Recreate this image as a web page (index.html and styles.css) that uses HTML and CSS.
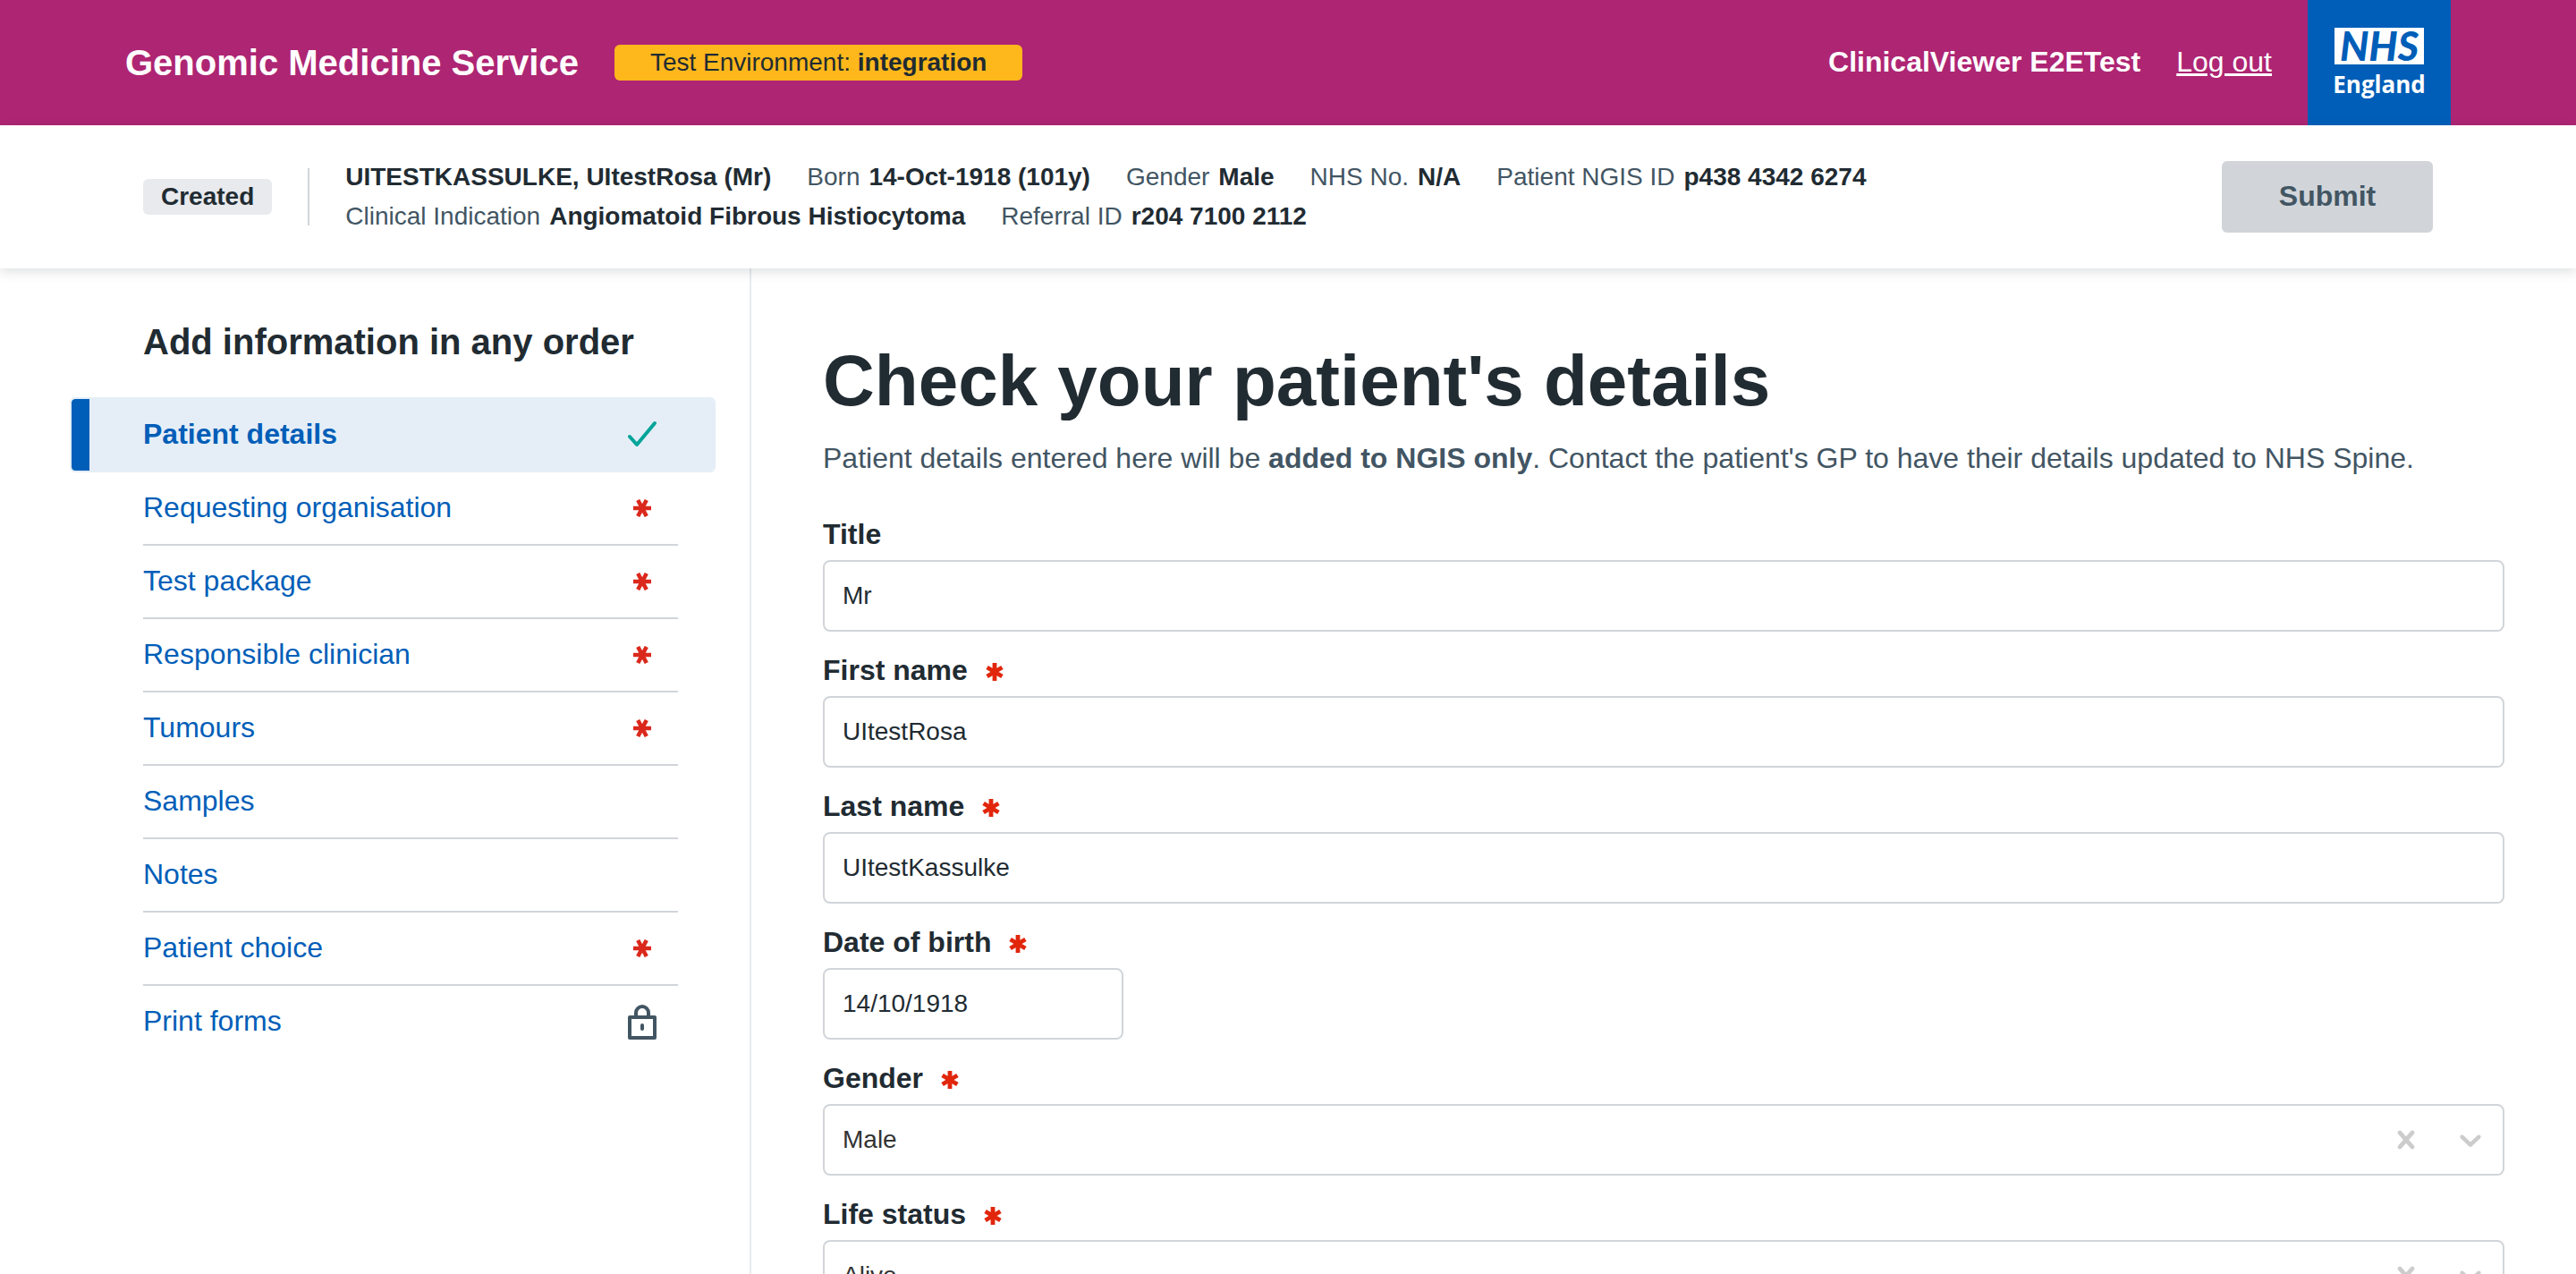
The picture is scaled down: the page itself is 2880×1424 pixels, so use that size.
FILE: index.html
```html
<!DOCTYPE html>
<html lang="en">
<head>
<meta charset="utf-8">
<meta name="viewport" content="width=device-width, initial-scale=1">
<title>Patient details - Genomic Medicine Service</title>
<link rel="stylesheet" href="styles.css">
</head>
<body>
<svg class="sprite" aria-hidden="true">
  <symbol id="required-nav" viewBox="0 0 20 20">
    <path d="M0 10h20M5.2 1l9.6 18M14.8 1L5.2 19" fill="none" stroke="currentColor" stroke-width="4.6"/>
  </symbol>
  <symbol id="required" viewBox="0 0 20 20">
    <path d="M10 0v20M1.6 5l16.8 10M18.4 5L1.6 15" fill="none" stroke="currentColor" stroke-width="4.8"/>
  </symbol>
  <symbol id="tick" viewBox="0 0 32 40">
    <path d="M2 22l8 9L30 7" fill="none" stroke="currentColor" stroke-width="4" stroke-linecap="round" stroke-linejoin="round"/>
  </symbol>
  <symbol id="lock" viewBox="0 0 32 40">
    <path d="M9 14V10a7 7 0 0 1 14 0v4" fill="none" stroke="currentColor" stroke-width="4"/>
    <rect x="2" y="15" width="28" height="23" fill="none" stroke="currentColor" stroke-width="4" stroke-linejoin="round"/>
    <rect x="14" y="22" width="4" height="8" rx="2" fill="currentColor"/>
  </symbol>
  <symbol id="clear" viewBox="0 0 20 20">
    <path fill="currentColor" d="M14.348 14.849c-0.469 0.469-1.229 0.469-1.697 0l-2.651-3.030-2.651 3.029c-0.469 0.469-1.229 0.469-1.697 0-0.469-0.469-0.469-1.229 0-1.697l2.758-3.15-2.759-3.152c-0.469-0.469-0.469-1.228 0-1.697s1.228-0.469 1.697 0l2.652 3.031 2.651-3.031c0.469-0.469 1.228-0.469 1.697 0s0.469 1.229 0 1.697l-2.758 3.152 2.758 3.15c0.469 0.469 0.469 1.229 0 1.698z"/>
  </symbol>
  <symbol id="chevron" viewBox="0 0 20 20">
    <path fill="currentColor" d="M4.516 7.548c0.436-0.446 1.043-0.481 1.576 0l3.908 3.747 3.908-3.747c0.533-0.481 1.141-0.446 1.574 0 0.436 0.445 0.408 1.197 0 1.615-0.406 0.418-4.695 4.502-4.695 4.502-0.217 0.223-0.502 0.335-0.787 0.335s-0.57-0.112-0.789-0.335c0 0-4.287-4.084-4.695-4.502s-0.436-1.17 0-1.615z"/>
  </symbol>
</svg>

<header class="site-header">
  <div class="site-title">Genomic Medicine Service</div>
  <div class="environment">Test Environment: <strong>integration</strong></div>
  <div class="account">
    <span class="user-name">ClinicalViewer E2ETest</span>
    <a class="log-out" href="#">Log out</a>
  </div>
  <div class="nhs-logo">
    <span class="nhs-mark">NHS</span>
    <span class="nhs-region">England</span>
  </div>
</header>

<section class="patient-bar" aria-label="Referral summary">
  <span class="status">Created</span>
  <dl class="summary">
    <div class="summary-row">
      <div class="fact"><dd>UITESTKASSULKE, UItestRosa (Mr)</dd></div>
      <div class="fact"><dt>Born</dt><dd>14-Oct-1918 (101y)</dd></div>
      <div class="fact"><dt>Gender</dt><dd>Male</dd></div>
      <div class="fact"><dt>NHS No.</dt><dd>N/A</dd></div>
      <div class="fact"><dt>Patient NGIS ID</dt><dd>p438 4342 6274</dd></div>
    </div>
    <div class="summary-row">
      <div class="fact"><dt>Clinical Indication</dt><dd>Angiomatoid Fibrous Histiocytoma</dd></div>
      <div class="fact"><dt>Referral ID</dt><dd>r204 7100 2112</dd></div>
    </div>
  </dl>
  <button class="submit" type="button">Submit</button>
</section>

<div class="workspace">
  <nav class="sidebar" aria-labelledby="todo-heading">
    <h2 class="sidebar-title" id="todo-heading">Add information in any order</h2>
    <ul class="todo">
      <li class="todo-item active"><a href="#" aria-current="page">Patient details</a><svg class="icon-large done"><use href="#tick"/></svg></li>
      <li class="todo-item"><a href="#">Requesting organisation</a><svg class="icon-small"><use href="#required-nav"/></svg></li>
      <li class="todo-item"><a href="#">Test package</a><svg class="icon-small"><use href="#required-nav"/></svg></li>
      <li class="todo-item"><a href="#">Responsible clinician</a><svg class="icon-small"><use href="#required-nav"/></svg></li>
      <li class="todo-item"><a href="#">Tumours</a><svg class="icon-small"><use href="#required-nav"/></svg></li>
      <li class="todo-item"><a href="#">Samples</a></li>
      <li class="todo-item"><a href="#">Notes</a></li>
      <li class="todo-item"><a href="#">Patient choice</a><svg class="icon-small"><use href="#required-nav"/></svg></li>
      <li class="todo-item"><a href="#">Print forms</a><svg class="icon-large locked"><use href="#lock"/></svg></li>
    </ul>
  </nav>

  <main class="content">
    <h1 class="page-title">Check your patient's details</h1>
    <p class="intro">Patient details entered here will be <strong>added to NGIS only</strong>. Contact the patient's GP to have their details updated to NHS Spine.</p>
    <form class="form">
      <div class="field">
        <label for="title">Title</label>
        <input id="title" type="text" value="Mr">
      </div>
      <div class="field">
        <label for="first-name">First name <svg class="required"><use href="#required"/></svg></label>
        <input id="first-name" type="text" value="UItestRosa">
      </div>
      <div class="field">
        <label for="last-name">Last name <svg class="required"><use href="#required"/></svg></label>
        <input id="last-name" type="text" value="UItestKassulke">
      </div>
      <div class="field">
        <label for="birth-date">Date of birth <svg class="required"><use href="#required"/></svg></label>
        <input class="date" id="birth-date" type="text" value="14/10/1918">
      </div>
      <div class="field">
        <label for="gender">Gender <svg class="required"><use href="#required"/></svg></label>
        <div class="dropdown">
          <select id="gender"><option>Male</option><option>Female</option><option>Other</option></select>
          <div class="indicators">
            <button type="button" aria-label="Clear gender"><svg><use href="#clear"/></svg></button>
            <svg><use href="#chevron"/></svg>
          </div>
        </div>
      </div>
      <div class="field">
        <label for="life-status">Life status <svg class="required"><use href="#required"/></svg></label>
        <div class="dropdown">
          <select id="life-status"><option>Alive</option><option>Deceased</option></select>
          <div class="indicators">
            <button type="button" aria-label="Clear life status"><svg><use href="#clear"/></svg></button>
            <svg><use href="#chevron"/></svg>
          </div>
        </div>
      </div>
    </form>
  </main>
</div>
</body>
</html>
```
FILE: styles.css
```css
* {
  box-sizing: border-box;
}

:root {
  --ink: #212b32;
  --slate: #425563;
  --line: #d1d5da;
  --blue: #005eb8;
}

body {
  margin: 0;
  height: 100vh;
  display: flex;
  flex-direction: column;
  background: #fff;
  color: var(--ink);
  font: 28px/40px "Liberation Sans", Arial, sans-serif;
}

.sprite {
  display: none;
}

.site-header {
  flex: none;
  display: flex;
  align-items: center;
  min-height: 140px;
  padding: 0 140px;
  background: #ae2573;
  color: #fff;
}

.site-title {
  margin-right: 40px;
  font-size: 40px;
  font-weight: bold;
}

.environment {
  padding: 0 40px;
  border-radius: 6px;
  background: #ffb81c;
  color: var(--ink);
}

.account {
  display: flex;
  gap: 40px;
  margin-left: auto;
  margin-right: 40px;
  padding-bottom: 2px;
  font-size: 32px;
}

.user-name {
  font-weight: bold;
}

.log-out {
  color: inherit;
}

.nhs-logo {
  align-self: stretch;
  display: flex;
  flex-direction: column;
  align-items: center;
  gap: 4px;
  width: 160px;
  padding-top: 31px;
  background: var(--blue);
}

.nhs-mark {
  width: 100px;
  background: #fff;
  color: var(--blue);
  font: italic 900 45px/41px Lato, sans-serif;
  text-align: center;
}

.nhs-region {
  font: bold 26px/36px "Open Sans", sans-serif;
}

.patient-bar {
  flex: none;
  position: relative;
  z-index: 1;
  display: flex;
  align-items: center;
  min-height: 160px;
  padding: 0 160px;
  background: #fff;
  box-shadow: 0 4px 12px rgba(33, 43, 50, 0.14);
}

.status {
  padding: 0 20px;
  border-radius: 6px;
  background: #e8eaee;
  font-weight: bold;
}

.summary {
  margin: 0 40px;
  padding-left: 42px;
  line-height: 44px;
  background: linear-gradient(var(--line), var(--line)) left center / 2px 64px no-repeat;
}

.summary-row {
  display: flex;
  flex-wrap: wrap;
  column-gap: 40px;
}

.fact {
  display: flex;
  gap: 10px;
}

.fact dt {
  color: var(--slate);
}

.fact dd {
  margin: 0;
  font-weight: bold;
}

.submit {
  width: 236px;
  height: 80px;
  margin-left: auto;
  padding: 0 0 2px;
  border: 0;
  border-radius: 6px;
  background: var(--line);
  color: var(--slate);
  font: bold 32px/40px "Liberation Sans", Arial, sans-serif;
}

.workspace {
  flex: 1;
  min-height: 0;
  display: flex;
}

.sidebar {
  flex: none;
  width: 840px;
  padding: 56px 80px 0 160px;
  border-right: 2px solid #e8eaee;
}

.sidebar-title {
  margin: 0 0 36px;
  font-size: 40px;
  line-height: 52px;
}

.todo {
  margin: 0;
  padding: 0;
  list-style: none;
}

.todo-item {
  display: flex;
  align-items: center;
  justify-content: space-between;
  min-height: 82px;
  padding-right: 24px;
  border-bottom: 2px solid var(--line);
  font-size: 32px;
}

.todo-item:last-child {
  border-bottom-color: transparent;
}

.todo-item a {
  padding-bottom: 2px;
  color: var(--blue);
  text-decoration: none;
}

.todo-item.active {
  min-height: 84px;
  margin: 0 -42px 0 -82px;
  padding: 0 64px 0 80px;
  border: 2px solid #e5eef7;
  border-radius: 6px;
  background: linear-gradient(var(--blue), var(--blue)) left center / 20px 100% no-repeat padding-box #e5eef7;
  font-weight: bold;
}

.icon-small {
  width: 20px;
  height: 20px;
  margin-right: 6px;
  color: #da291c;
}

.icon-large {
  width: 32px;
  height: 40px;
}

.done {
  color: #00a499;
}

.locked {
  color: var(--slate);
}

.content {
  flex: 1;
  min-width: 0;
  padding: 80px;
  overflow-y: auto;
  scrollbar-width: none;
}

.page-title {
  margin: 0 0 16px;
  font-size: 80px;
  line-height: 92px;
}

.intro {
  margin: 0 0 42px;
  color: var(--slate);
  font-size: 32px;
  line-height: 48px;
}

.form {
  display: flex;
  flex-direction: column;
  gap: 24px;
}

.field {
  display: flex;
  flex-direction: column;
  gap: 10px;
}

.field label {
  display: flex;
  align-items: center;
  gap: 20px;
  font-size: 32px;
  line-height: 38px;
  font-weight: bold;
}

.required {
  width: 20px;
  height: 20px;
  margin-top: 4px;
  color: #e1260c;
}

.field input,
.field select {
  width: 100%;
  height: 80px;
  padding: 0 20px;
  border: 2px solid var(--line);
  border-radius: 8px;
  background: #fff;
  color: var(--ink);
  font: 28px/40px "Liberation Sans", Arial, sans-serif;
  appearance: none;
}

.field .date {
  width: 336px;
}

.dropdown {
  display: grid;
  align-items: center;
}

.dropdown > * {
  grid-area: 1 / 1;
}

.dropdown select {
  color: #333;
}

.indicators {
  z-index: 1;
  justify-self: end;
  display: flex;
  gap: 32px;
  margin-right: 18px;
  color: #ccc;
  pointer-events: none;
}

.indicators button {
  padding: 0;
  border: 0;
  background: none;
  color: inherit;
  pointer-events: auto;
}

.indicators svg {
  display: block;
  width: 40px;
  height: 40px;
}
```
